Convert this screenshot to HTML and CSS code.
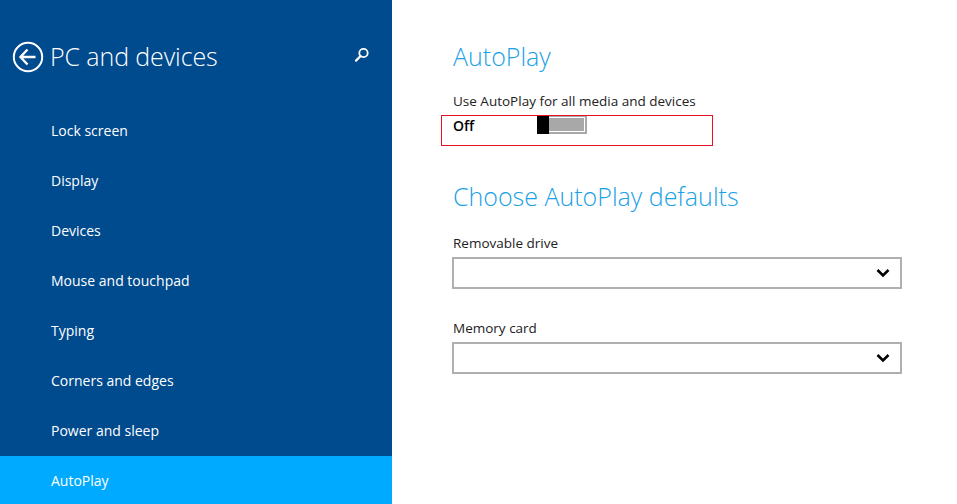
FILE: index.html
```html
<!DOCTYPE html>
<html>
<head>
<meta charset="utf-8">
<link rel="stylesheet" href="styles.css">
</head>
<body>
<div class="app">
  <nav class="sidebar">
    <div class="header">
      <svg class="back" width="32" height="32" viewBox="0 0 32 32">
        <circle cx="16" cy="16" r="14.2" fill="none" stroke="#fff" stroke-width="2"/>
        <path d="M8.5 16 H23.5 M15.5 8.5 L8.5 16 L15.5 23.5" fill="none" stroke="#fff" stroke-width="2.4" stroke-linejoin="miter"/>
      </svg>
      <h1 class="title">PC and devices</h1>
      <svg class="search" width="16" height="16" viewBox="0 0 16 16">
        <circle cx="9.5" cy="6" r="4.2" fill="none" stroke="#fff" stroke-width="1.8"/>
        <path d="M6.6 9 L2 13.6" stroke="#fff" stroke-width="2.2" stroke-linecap="round"/>
      </svg>
    </div>
    <ul class="menu">
      <li>Lock screen</li>
      <li>Display</li>
      <li>Devices</li>
      <li>Mouse and touchpad</li>
      <li>Typing</li>
      <li>Corners and edges</li>
      <li>Power and sleep</li>
      <li class="active">AutoPlay</li>
    </ul>
  </nav>
  <main class="content">
    <h2 class="heading">AutoPlay</h2>
    <div class="label first-label">Use AutoPlay for all media and devices</div>
    <div class="toggle-row">
      <span class="state">Off</span>
      <span class="switch"><span class="thumb"></span><span class="track"></span></span>
    </div>
    <h2 class="heading second">Choose AutoPlay defaults</h2>
    <div class="label field-label">Removable drive</div>
    <div class="select">
      <svg class="chev" width="14" height="10" viewBox="0 0 14 10"><path d="M1.5 2 L7 7.5 L12.5 2" fill="none" stroke="#000" stroke-width="2.6"/></svg>
    </div>
    <div class="label field-label second-field">Memory card</div>
    <div class="select">
      <svg class="chev" width="14" height="10" viewBox="0 0 14 10"><path d="M1.5 2 L7 7.5 L12.5 2" fill="none" stroke="#000" stroke-width="2.6"/></svg>
    </div>
  </main>
</div>
</body>
</html>
```

FILE: styles.css
```css
* { box-sizing: border-box; }
html, body { margin: 0; padding: 0; }
body {
  width: 957px;
  height: 504px;
  overflow: hidden;
  background: #fff;
  font-family: "Open Sans", "Noto Sans", "Liberation Sans", sans-serif;
}
.app {
  display: flex;
  height: 504px;
}
.sidebar {
  width: 392px;
  flex: 0 0 392px;
  background: #004a8e;
  color: #fff;
  display: flex;
  flex-direction: column;
  overflow: hidden;
}
.header {
  height: 106px;
  flex: 0 0 106px;
  display: flex;
  align-items: center;
  padding: 0 0 0 12px;
}
.back {
  flex: 0 0 32px;
  margin-top: 8px;
}
.title {
  margin: 0 0 0 6px;
  font-size: 25px;
  font-weight: 300;
  letter-spacing: -0.1px;
  flex: 1;
  margin-top: 6px;
}
.search {
  margin-right: 22px;
  margin-top: 4px;
}
.menu {
  list-style: none;
  margin: 0;
  padding: 0;
  flex: 0 0 auto;
}
.menu li {
  height: 50px;
  line-height: 48px;
  padding-top: 1px;
  padding-left: 51px;
  font-size: 14px;
  color: #fff;
}
.menu li.active {
  background: #00aaff;
}
.content {
  flex: 1;
  padding: 38px 0 0 61px;
  color: #222;
}
.heading {
  margin: 0;
  font-size: 25px;
  font-weight: 300;
  color: #1ba1e6;
  line-height: 36px;
}
.label {
  font-size: 13.5px;
  line-height: 20px;
  color: #222;
}
.first-label {
  margin-top: 17px;
}
.toggle-row {
  margin-top: 4px;
  margin-left: -12px;
  width: 272px;
  height: 31px;
  border: 1px solid #e81123;
  display: flex;
  align-items: flex-start;
  padding-left: 11px;
}
.state {
  font-size: 14px;
  font-weight: 600;
  color: #000;
  line-height: 18px;
  width: 84px;
  margin-top: 1px;
}
.switch {
  display: flex;
  height: 18px;
}
.thumb {
  width: 12px;
  height: 18px;
  background: #000;
}
.track {
  width: 38px;
  height: 18px;
  background: #a8a8a8;
  border: 2px solid #a8a8a8;
  border-left: 0;
  border-top: 1px solid #a8a8a8;
  box-shadow: inset -1px -1px 0 #fff, inset 0 1px 0 #fff;
}
.heading.second {
  margin-top: 32px;
}
.field-label {
  margin-top: 19px;
}
.second-field {
  margin-top: 29px;
}
.select {
  margin-top: 4px;
  margin-left: -1px;
  width: 450px;
  height: 32px;
  border: 2px solid #b0b0b0;
  display: flex;
  align-items: center;
  justify-content: flex-end;
  padding-right: 10px;
}
.chev {
  display: block;
}
```
